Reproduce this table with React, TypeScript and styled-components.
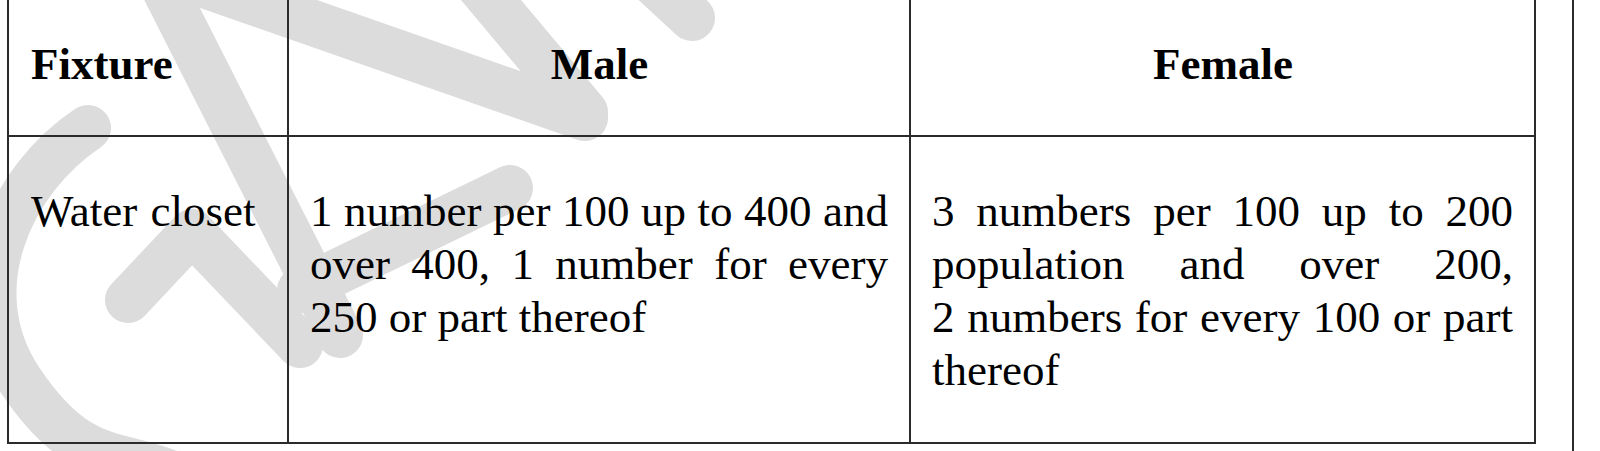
import styled, { createGlobalStyle } from "styled-components";

const GlobalStyle = createGlobalStyle`
  html, body {
    margin: 0;
    padding: 0;
    background: #ffffff;
  }
`;

const Page = styled.div`
  position: relative;
  width: 1572px;
  height: 451px;
  overflow: hidden;
  border-right: 2px solid #2b2b2b;
  font-family: "Liberation Serif", "Times New Roman", serif;
  color: #000;
`;

const Watermark = styled.svg`
  position: absolute;
  left: 0;
  top: 0;
  width: 1600px;
  height: 451px;
  z-index: 0;
  pointer-events: none;
`;

const Table = styled.table`
  position: relative;
  z-index: 1;
  margin-left: 7px;
  width: 1527px;
  table-layout: fixed;
  border-collapse: collapse;
  font-size: 45px;
  line-height: 53px;
`;

const HeadCell = styled.th<{ align?: "left" | "center" }>`
  border: 2px solid #2b2b2b;
  border-top: none;
  padding: 38px 21px 44px 22px;
  font-weight: 700;
  text-align: ${(p) => p.align ?? "center"};
  vertical-align: top;
`;

const BodyCell = styled.td<{ lastJustify?: boolean }>`
  border: 2px solid #2b2b2b;
  padding: 48px 21px 45px 21px;
  vertical-align: top;
  text-align: justify;
  text-align-last: ${(p) => (p.lastJustify ? "justify" : "auto")};
`;

const LabelCell = styled(BodyCell)`
  padding-left: 22px;
  text-align: left;
  word-spacing: 2px;
`;

function App() {
  return (
    <Page>
      <GlobalStyle />
      <Watermark viewBox="0 0 1600 451">
        <g
          fill="none"
          stroke="#dcdcdc"
          strokeWidth={46}
          strokeLinecap="round"
          strokeLinejoin="round"
        >
          {/* G */}
          <path d="M 88 128 C 10 180, -40 290, 20 380 S 120 450, 175 475" />
          <path d="M 128 300 L 192 232 L 300 345" />
          {/* A */}
          <path d="M 165 -10 L 340 335" />
          <path d="M 190 -20 L 585 118" />
          <path d="M 300 290 L 510 188" />
          {/* top strokes */}
          <path d="M 470 -25 L 585 112" />
          <path d="M 640 -30 L 692 18" />
        </g>
      </Watermark>
      <Table>
        <colgroup>
          <col style={{ width: 280 }} />
          <col style={{ width: 622 }} />
          <col style={{ width: 625 }} />
        </colgroup>
        <thead>
          <tr>
            <HeadCell align="left">Fixture</HeadCell>
            <HeadCell>Male</HeadCell>
            <HeadCell>Female</HeadCell>
          </tr>
        </thead>
        <tbody>
          <tr>
            <LabelCell>Water closet</LabelCell>
            <BodyCell>
              1 number per 100 up to 400 and over 400, 1 number for every 250
              or part thereof
            </BodyCell>
            <BodyCell lastJustify>
              3 numbers per 100 up to 200 population and over 200,
              <br />2 numbers for every 100 or part thereof
            </BodyCell>
          </tr>
        </tbody>
      </Table>
    </Page>
  );
}

export default App;
